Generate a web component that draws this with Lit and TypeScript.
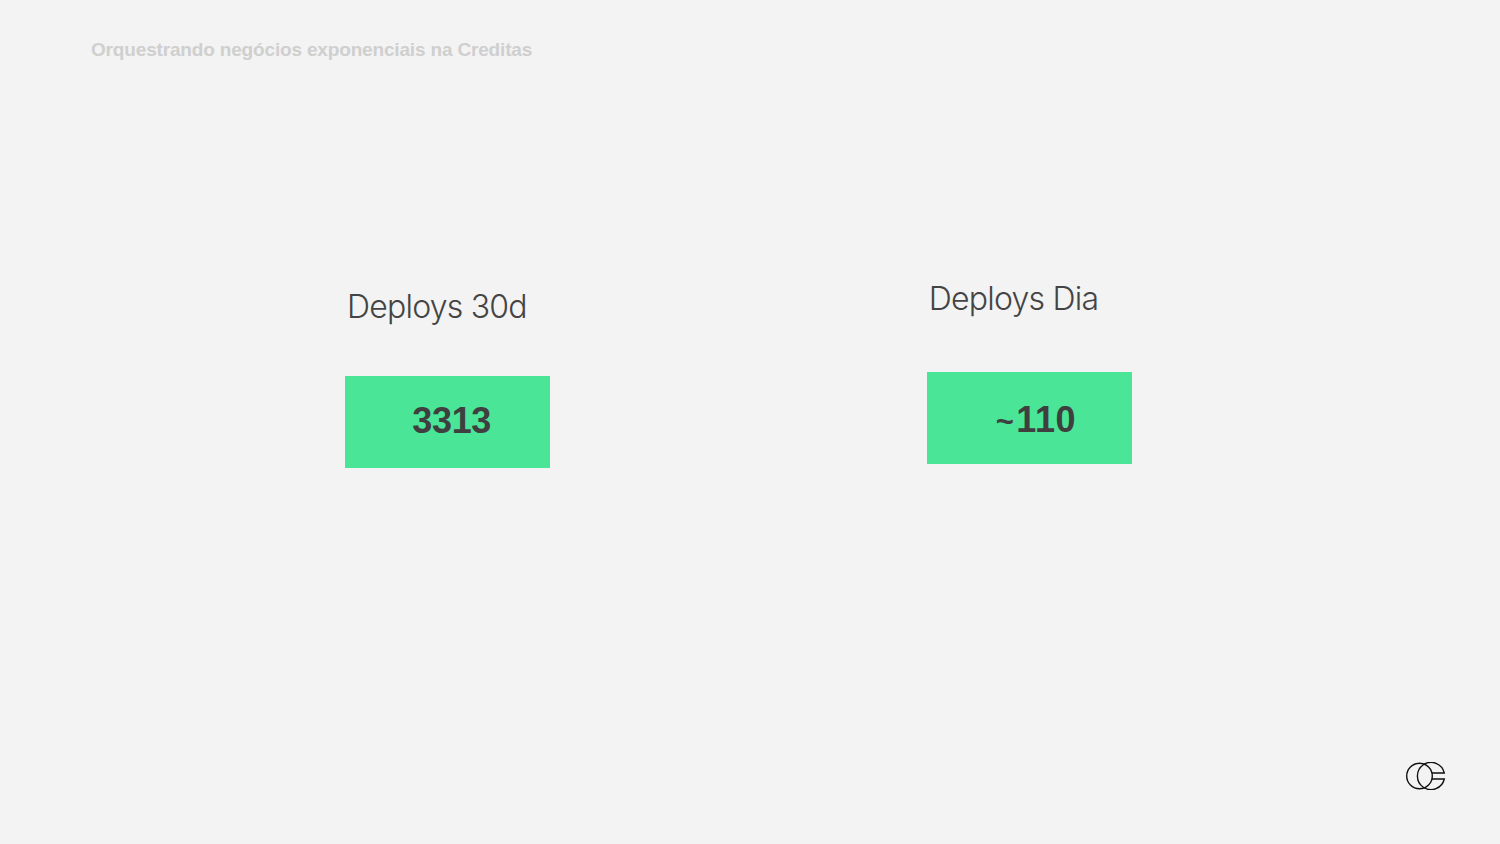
import { LitElement, html, css } from "lit";
import { customElement } from "lit/decorators.js";

@customElement("app-root")
export class AppRoot extends LitElement {
  static styles = css`
    :host {
      display: flex;
      flex-direction: column;
      width: 1500px;
      height: 844px;
      background: #f3f3f3;
      font-family: "Liberation Sans", Arial, sans-serif;
      overflow: hidden;
      box-sizing: border-box;
    }
    .title {
      margin: 38px 0 0 91px;
      font-size: 19px;
      line-height: 23px;
      font-weight: 700;
      color: #cfcfcf;
      letter-spacing: -0.165px;
    }
    .metrics {
      flex: 1;
      display: flex;
      align-items: flex-start;
      padding-left: 345px;
      gap: 376.5px;
    }
    .metric {
      display: flex;
      flex-direction: column;
      width: 205.3px;
    }
    .one { margin-top: 226px; }
    .two { margin-top: 218px; }
    .label {
      font-family: Inter, "Liberation Sans", sans-serif;
      font-weight: 300;
      font-size: 32px;
      line-height: 40px;
      color: #444;
      white-space: nowrap;
      letter-spacing: -0.78px;
      padding-left: 2px;
    }
    .one .label { margin-bottom: 49.4px; }
    .two .label { margin-bottom: 53px; }
    .box {
      height: 92px;
      background: #4ae597;
      display: flex;
      align-items: center;
      justify-content: center;
      padding-left: 8px;
      padding-bottom: 2px;
      box-sizing: border-box;
      font-size: 36px;
      font-weight: 700;
      color: #3f3f3f;
      letter-spacing: -0.3px;
    }
    .two .box {
      letter-spacing: 0.6px;
      padding-top: 4px;
      padding-bottom: 0;
      padding-left: 13px;
    }
    .tilde {
      font-size: 31px;
      margin-right: 2px;
      position: relative;
      top: 2px;
    }
    .footer {
      display: flex;
      justify-content: flex-end;
      padding: 0 54px 54px 0;
    }
    svg { display: block; }
  `;

  render() {
    return html`
      <div class="title">Orquestrando negócios exponenciais na Creditas</div>
      <div class="metrics">
        <div class="metric one">
          <div class="label">Deploys 30d</div>
          <div class="box">3313</div>
        </div>
        <div class="metric two">
          <div class="label">Deploys Dia</div>
          <div class="box"><span class="tilde">~</span>110</div>
        </div>
      </div>
      <div class="footer">
        <svg width="40" height="28" viewBox="0 0 40 28" fill="none" stroke="#111" stroke-width="1.4">
          <circle cx="13.5" cy="14" r="12.8" />
          <path d="M26 11 H38.27 A13.6 13.6 0 1 0 38.27 17 H26" />
        </svg>
      </div>
    `;
  }
}
